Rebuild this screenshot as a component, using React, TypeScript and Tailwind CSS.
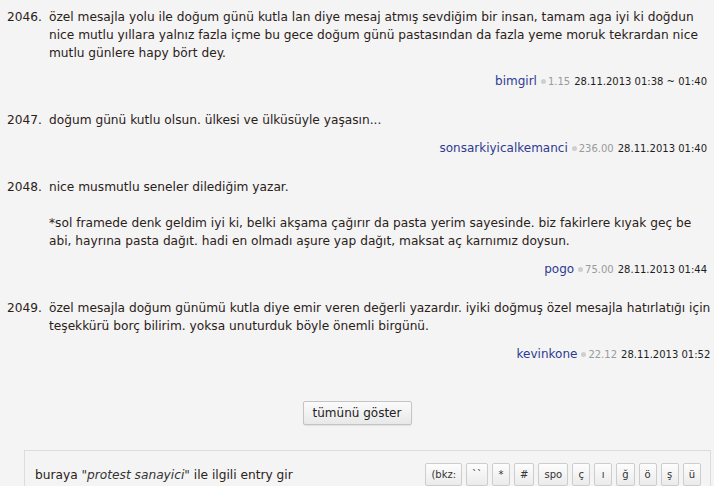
import React from "react";

type Entry = {
  no: number;
  lines: string[];
  author: string;
  score: string;
  date: string;
};

const entries: Entry[] = [
  {
    no: 2046,
    lines: [
      "özel mesajla yolu ile doğum günü kutla lan diye mesaj atmış sevdiğim bir insan, tamam aga iyi ki doğdun",
      "nice mutlu yıllara yalnız fazla içme bu gece doğum günü pastasından da fazla yeme moruk tekrardan nice",
      "mutlu günlere hapy bört dey.",
    ],
    author: "bimgirl",
    score: "1.15",
    date: "28.11.2013 01:38 ~ 01:40",
  },
  {
    no: 2047,
    lines: ["doğum günü kutlu olsun. ülkesi ve ülküsüyle yaşasın..."],
    author: "sonsarkiyicalkemanci",
    score: "236.00",
    date: "28.11.2013 01:40",
  },
  {
    no: 2048,
    lines: [
      "nice musmutlu seneler dilediğim yazar.",
      "",
      "*sol framede denk geldim iyi ki, belki akşama çağırır da pasta yerim sayesinde. biz fakirlere kıyak geç be",
      "abi, hayrına pasta dağıt. hadi en olmadı aşure yap dağıt, maksat aç karnımız doysun.",
    ],
    author: "pogo",
    score: "75.00",
    date: "28.11.2013 01:44",
  },
  {
    no: 2049,
    lines: [
      "özel mesajla doğum günümü kutla diye emir veren değerli yazardır. iyiki doğmuş özel mesajla hatırlatığı için",
      "teşekkürü borç bilirim. yoksa unuturduk böyle önemli birgünü.",
    ],
    author: "kevinkone",
    score: "22.12",
    date: "28.11.2013 01:52",
  },
];

const tools = ["(bkz:", "``", "*", "#", "spo", "ç", "ı", "ğ", "ö", "ş", "ü"];

function EntryRow({ e }: { e: Entry }) {
  return (
    <li className="flex mb-[21px]">
      <span className="w-[42px] shrink-0 leading-[18px]">{e.no}.</span>
      <div className="flex-1">
        <div className="leading-[18px] whitespace-nowrap">
          {e.lines.map((l, i) => (
            <div key={i} className="h-[18px]">{l}</div>
          ))}
        </div>
        <div className="mt-[10px] h-[18px] flex items-center justify-end gap-[4px] whitespace-nowrap">
          <span className="text-[#2e3a92] text-[12px]">{e.author}</span>
          <span className="flex items-center gap-[2px] text-[10px] text-[#9a9a9a]">
            <span className="w-[5px] h-[5px] rounded-full bg-[#cfcfcf] inline-block" />
            {e.score}
          </span>
          <span className="text-[10px] text-[#1e1e1e]">{e.date}</span>
        </div>
      </div>
    </li>
  );
}

export default function App() {
  return (
    <div className="w-[714px] h-[486px] overflow-hidden bg-[#f4f4f4] text-[#2a2118] text-[12.2px] font-['DejaVu_Sans',Verdana,sans-serif]">
      <ol className="pt-[8px] pl-[7px] pr-[7px]">
        {entries.map((e) => (
          <EntryRow key={e.no} e={e} />
        ))}
      </ol>
      <div className="flex justify-center mt-[38px]">
        <button className="h-[24px] w-[109px] border border-[#c4c4c4] rounded-[2px] bg-gradient-to-b from-[#fbfbfb] to-[#e8e8e8] text-[12px] text-[#222] shadow-[0_1px_1px_rgba(0,0,0,0.08)]">
          tümünü göster
        </button>
      </div>
      <div className="ml-[24px] mr-[3px] mt-[25px] border border-[#dcdcdc] h-[60px] pl-[10px] pr-[9px] pt-[12px] flex items-start justify-between">
        <div className="leading-[18px] pt-[3px]">
          buraya <i className="text-[#333]">"protest sanayici"</i> ile ilgili entry gir
        </div>
        <div className="flex gap-[4px]">
          {tools.map((t) => (
            <button
              key={t}
              className="h-[23px] min-w-[18px] px-[5px] border border-[#cdcdcd] rounded-[2px] bg-gradient-to-b from-[#fdfdfd] to-[#ebebeb] text-[10px] text-[#333] leading-none"
            >
              {t}
            </button>
          ))}
        </div>
      </div>
    </div>
  );
}
